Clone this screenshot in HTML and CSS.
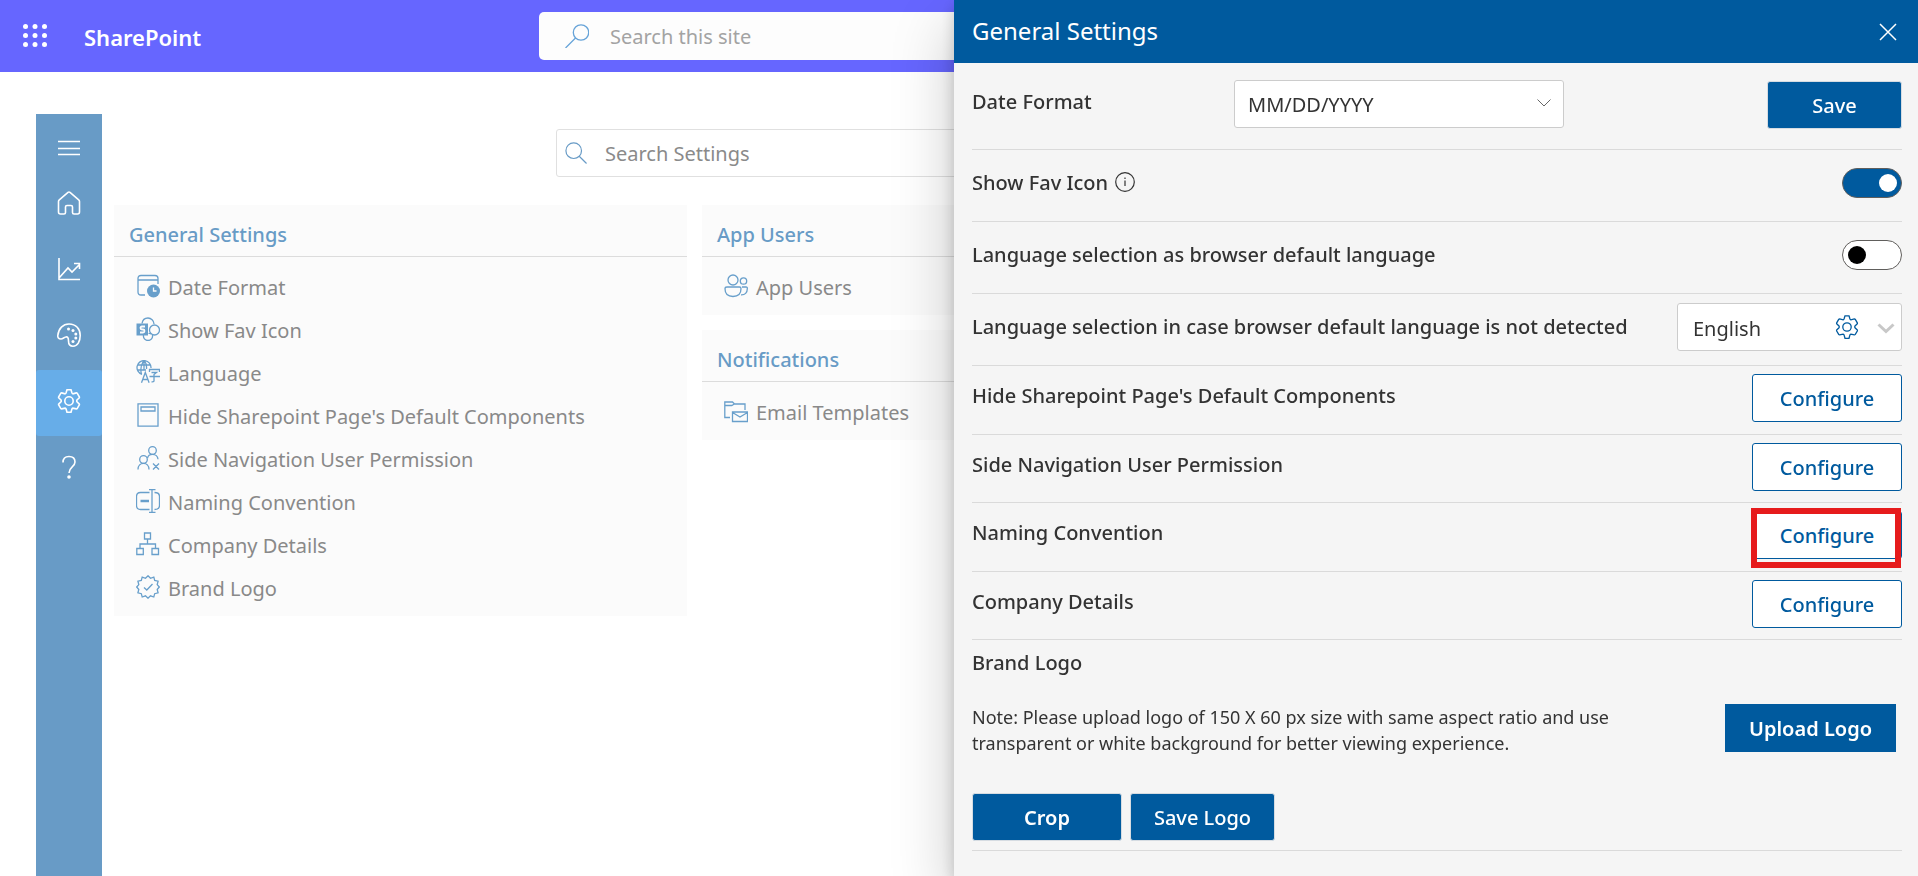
FILE: index.html
```
<!DOCTYPE html>
<html lang="en">
<head>
<meta charset="utf-8">
<title>SharePoint - General Settings</title>
<link rel="stylesheet" href="styles.css">
</head>
<body>
<svg class="defs" aria-hidden="true">
  <symbol id="gear" viewBox="0 0 24 24"><path d="M10 .8h4l.9 3q.3.8 1 1l3.400-.9q.7 0 1 .5l2 3.400q.3.800-.2 1.200L20 11q-.5.900 0 1.800l2.100 2q.5.500.2 1.200l-2 3.400q-.4.500-1 .5l-3.400-.8q-.7.200-1 1l-.9 3.200h-4l-.9-3.200q-.3-.8-1-1l-3.400.8q-.7 0-1-.5l-2-3.400q-.3-.700.2-1.200l2.100-2q.5-.900 0-1.800L1.900 9q-.5-.4-.2-1.200l2-3.400q.3-.5 1-.5l3.400.9q.7-.2 1-1z"/><circle cx="12" cy="12" r="4.200"/></symbol>
  <symbol id="people" viewBox="0 0 24 24"><circle cx="9" cy="6" r="5"/><circle cx="19.500" cy="7" r="3.200"/><path d="M3 13h12.500q1.500 0 1.500 1.800c0 5-3 7.700-8 7.700s-8-2.700-8-7.700Q1 13 3 13zM18 13h4q1.500 0 1.300 1.800c0 4-2.300 6.200-6.300 6"/></symbol>
</svg>

<header class="topbar">
  <button class="waffle" aria-label="App launcher">
    <svg width="24" height="24" viewBox="0 0 24 24"><g fill="currentColor"><circle cx="2.500" cy="2.500" r="2.500"/><circle cx="12" cy="2.500" r="2.500"/><circle cx="21.500" cy="2.500" r="2.500"/><circle cx="2.500" cy="11.500" r="2.500"/><circle cx="12" cy="11.500" r="2.500"/><circle cx="21.500" cy="11.500" r="2.500"/><circle cx="2.500" cy="20.500" r="2.500"/><circle cx="12" cy="20.500" r="2.500"/><circle cx="21.500" cy="20.500" r="2.500"/></g></svg>
  </button>
  <a class="brand" href="#">SharePoint</a>
  <label class="site-search">
    <svg class="icon" viewBox="0 0 24 24"><circle cx="16" cy="8.500" r="7.700"/><path d="M10.500 14 .5 24"/></svg>
    <input type="search" placeholder="Search this site" aria-label="Search this site">
  </label>
</header>

<div class="workspace">
  <nav class="rail" aria-label="Main">
    <button class="rail-item rail-menu" aria-label="Menu"><svg class="icon" viewBox="0 0 24 24"><path d="M1 5.500h22M1 12.500h22M1 18.500h22"/></svg></button>
    <a class="rail-item" href="#" aria-label="Home"><svg class="icon" viewBox="0 0 24 24"><path d="M1.500 10.500Q1.500 9.500 2.300 8.800L11 1.400q1-.8 2 0l8.700 7.400q.8.700.8 1.700V21q0 2-2 2H17q-1.500 0-1.500-1.500V16q0-1.500-1.500-1.500h-4q-1.500 0-1.500 1.500v5.500Q8.500 23 7 23H3.500q-2 0-2-2z"/></svg></a>
    <a class="rail-item" href="#" aria-label="Analytics"><svg class="icon" viewBox="0 0 24 24"><path d="M2 1v21.500h21M2 21l9-10 4 4 8-8M17 6.500h5.500V12"/></svg></a>
    <a class="rail-item" href="#" aria-label="Theme"><svg class="icon" viewBox="0 0 24 24"><path d="M.8 12.500C1.500 5.500 6 1 12 1c7 0 11.200 5 11.200 11.500 0 6-2.700 10.700-7.200 10.700-3.200 0-4.500-2-4.500-5.200 0-3.500-1-4.500-2.800-4-2 .5-2.700 2-4.700 2C1.500 16 .6 14.500.8 12.500z"/><g fill="currentColor" stroke="none"><circle cx="11.500" cy="6" r="1.500"/><circle cx="16" cy="7.500" r="1.500"/><circle cx="18.800" cy="11" r="1.500"/><circle cx="18.800" cy="15" r="1.500"/><circle cx="16" cy="18.500" r="1.500"/></g></svg></a>
    <a class="rail-item active" href="#" aria-label="Settings"><svg class="icon"><use href="#gear"/></svg></a>
    <a class="rail-item" href="#" aria-label="Help"><svg class="icon" viewBox="0 0 24 24"><path d="M6 7.500C6 3.500 8.500 1.500 12 1.500s6 2 6 5.500c0 5-6 5-6 11"/><circle cx="12" cy="22" r="1" fill="currentColor"/></svg></a>
  </nav>

  <main class="content">
    <label class="settings-search">
      <svg class="icon" viewBox="0 0 24 24"><circle cx="9.500" cy="9.500" r="8.500"/><path d="m15.500 15.500 8 8"/></svg>
      <input type="search" placeholder="Search Settings" aria-label="Search Settings">
    </label>
    <div class="cards">
      <section class="card">
        <h2>General Settings</h2>
        <ul>
          <li><a href="#"><svg class="icon" viewBox="0 0 24 24"><path d="M9 21H5q-3 0-3-3V4.500q0-3 3-3h14q3 0 3 3V10M2 6h20"/><circle cx="17.500" cy="17" r="6.500" fill="currentColor" stroke="none"/><path d="M17.500 13.500V17h3" stroke="#fbfbfb"/></svg>Date Format</a></li>
          <li><a href="#"><svg class="icon" viewBox="0 0 24 24"><path d="M6 6.500C6.500 3 9 1 12 1s6 2.500 6 6"/><circle cx="18.500" cy="13" r="5"/><path d="M7.500 18c-.5 3 1.500 5.500 4.500 5.500s5-2.500 4.500-5.500M12.500 16.500q1.500-.5 2.500.5"/><path d="M.5 6.500H12v12H.5z" fill="currentColor" stroke="none"/><path d="M9 9.500H6q-1.500 0-1.500 1.500T6 12.500h1Q8.500 12.500 8.500 14T7 15.500H4" stroke="#fbfbfb" stroke-width="1.800"/></svg>Show Fav Icon</a></li>
          <li><a href="#"><svg class="icon" viewBox="0 0 24 24"><path d="M6 14.300A7 7 0 1 1 15 8M1.500 5h13M1 10h9M5.500 14Q3.500 7.500 7.500.8M10.500 9Q11 4 8.500.8M8 .8V10"/><path d="m5.500 22.800 3.800-10.300 3.800 10.300M7 19.500h5M13.500 12V9.500h10V12M15.500 12.500h5l-2.500 2v6.500q0 1-2.500.8M13.500 16.500h10.500"/></svg>Language</a></li>
          <li><a href="#"><svg class="icon" viewBox="0 0 24 24"><path d="M2 .8h20v22.400H2zM5 4h14v4H5z"/></svg>Hide Sharepoint Page's Default Components</a></li>
          <li><a href="#"><svg class="icon" viewBox="0 0 24 24"><circle cx="16.500" cy="4.500" r="3.800"/><circle cx="7.500" cy="13.500" r="3.800"/><path d="M2 23.500c0-4 2.500-6.200 5.500-6.200s5.500 2.200 5.500 6.200M11.500 12c.5-2.500 2.500-3.700 5-3.700 3 0 5.300 2.200 5.500 5M17 17.500l6 6M23 17.500l-6 6"/></svg>Side Navigation User Permission</a></li>
          <li><a href="#"><svg class="icon" viewBox="0 0 24 24"><path d="M13.500 3.500H4.500q-4 0-4 4v9q0 4 4 4h9M18.500 3.500q5 0 5 4v9q0 4-5 4M16 .7v22.600M13 .7h6.500M13 23.300h6.500"/><path d="M4.500 12h8.500" stroke-width="2.500"/></svg>Naming Convention</a></li>
          <li><a href="#"><svg class="icon" viewBox="0 0 24 24"><path d="M8.500 1h6v6h-6zM.8 16.500h6.500v6H.8zM16 16.500h6.500v6H16zM11.500 7v5M4 16.500V12h15.500v4.500"/></svg>Company Details</a></li>
          <li><a href="#"><svg class="icon" viewBox="0 0 24 24"><path d="m12 .8 2.500 2.500 3.300-1.200.9 3.300 3.400.8-.9 3.400L23.300 12l-2.100 2.500.9 3.300-3.400.9-.9 3.300-3.300-1.200L12 23.200l-2.500-2.400L6.200 22l-.9-3.300-3.400-.9.9-3.300L.7 12l2.100-2.400-.9-3.400 3.400-.8.900-3.300 3.300 1.200zM8 12.500l2.800 2.500L16.500 9"/></svg>Brand Logo</a></li>
        </ul>
      </section>
      <div class="card-column">
        <section class="card">
          <h2>App Users</h2>
          <ul>
            <li><a href="#"><svg class="icon"><use href="#people"/></svg>App Users</a></li>
          </ul>
        </section>
        <section class="card">
          <h2>Notifications</h2>
          <ul>
            <li><a href="#"><svg class="icon" viewBox="0 0 24 24"><path d="M6 18.500H.8V3h7.700l2 2H21v6M.8 6.500h7l2.500-1.500M8.500 13h15v9.500h-15zM8.500 13.500l7.500 4.500 7.500-4.500"/></svg>Email Templates</a></li>
          </ul>
        </section>
      </div>
    </div>
  </main>
</div>

<aside class="panel" aria-labelledby="panel-title">
  <div class="panel-head">
    <h1 id="panel-title">General Settings</h1>
    <button class="close" aria-label="Close"><svg class="icon" viewBox="0 0 18 18"><path d="m1 1 16 16M17 1 1 17"/></svg></button>
  </div>
  <form class="panel-body">
    <div class="row row-date">
      <label class="label" for="date-format">Date Format</label>
      <div class="select-box date-box">
        <select id="date-format"><option>MM/DD/YYYY</option><option>DD/MM/YYYY</option></select>
        <svg class="chevron thin" viewBox="0 0 14 8"><path d="m.5.5 6.500 6.500 6.500-6.500"/></svg>
      </div>
      <button class="btn primary save" type="button">Save</button>
    </div>
    <div class="row">
      <label class="label" for="fav">Show Fav Icon <svg class="info" viewBox="0 0 20 20"><circle cx="10" cy="10" r="9.300"/><path d="M10 8.500V14M10 5.500v1.500"/></svg></label>
      <input class="toggle" id="fav" type="checkbox" role="switch" checked>
    </div>
    <div class="row">
      <label class="label" for="browser-lang">Language selection as browser default language</label>
      <input class="toggle" id="browser-lang" type="checkbox" role="switch">
    </div>
    <div class="row">
      <label class="label" for="fallback-lang">Language selection in case browser default language is not detected</label>
      <div class="select-box lang-box">
        <select id="fallback-lang"><option>English</option></select>
        <svg class="lang-gear icon"><use href="#gear"/></svg>
        <svg class="chevron thick" viewBox="0 0 18 11"><path d="m1.500 1.500 7.500 7 7.500-7"/></svg>
      </div>
    </div>
    <div class="row compact"><span class="label" id="l-hide">Hide Sharepoint Page's Default Components</span><button class="btn outline" type="button" aria-describedby="l-hide">Configure</button></div>
    <div class="row compact short"><span class="label" id="l-nav">Side Navigation User Permission</span><button class="btn outline" type="button" aria-describedby="l-nav">Configure</button></div>
    <div class="row compact"><span class="label" id="l-name">Naming Convention</span><span class="highlight"><button class="btn outline" type="button" aria-describedby="l-name">Configure</button></span></div>
    <div class="row compact short"><span class="label" id="l-comp">Company Details</span><button class="btn outline" type="button" aria-describedby="l-comp">Configure</button></div>
    <section class="logo-section">
      <h2 class="label">Brand Logo</h2>
      <div class="upload">
        <p>Note: Please upload logo of 150 X 60 px size with same aspect ratio and use transparent or white background for better viewing experience.</p>
        <button class="btn upload-btn" type="button">Upload Logo</button>
      </div>
      <div class="logo-actions">
        <button class="btn primary crop" type="button">Crop</button>
        <button class="btn primary save-logo" type="button">Save Logo</button>
      </div>
    </section>
  </form>
</aside>
</body>
</html>
```
FILE: styles.css
```
* { box-sizing: border-box; }

html, body { height: 100%; }

body {
  margin: 0;
  display: flex;
  flex-direction: column;
  overflow: hidden;
  background: #fff;
  color: #333;
  font: 20px/26px "Noto Sans", "Open Sans", sans-serif;
}

button, input, select { font: inherit; color: inherit; }
h1, h2, p, ul { margin: 0; padding: 0; }
ul { list-style: none; }
a { color: inherit; text-decoration: none; }
.defs { display: none; }

.icon {
  flex: none;
  width: 24px;
  height: 24px;
  fill: none;
  stroke: currentColor;
  stroke-width: 1.3;
}

/* Top bar */
.topbar {
  flex: none;
  display: flex;
  align-items: center;
  height: 72px;
  padding-left: 23px;
  background: #66f;
  color: #fff;
}
.waffle { display: flex; padding: 0; border: 0; background: none; }
.brand { width: 455px; margin-left: 37px; padding-top: 2px; font-size: 22px; font-weight: 600; }
.site-search {
  display: flex;
  align-items: center;
  gap: 21px;
  width: 700px;
  height: 48px;
  padding: 0 26px;
  border-radius: 5px;
  background: #fdfdfd;
  color: #66a3d8;
}
input[type="search"] {
  flex: 1;
  min-width: 0;
  padding: 1px 0 0;
  border: 0;
  outline: 0;
  background: none;
}
.site-search ::placeholder { color: #a3a3a3; }
.settings-search ::placeholder { color: #8a8a8a; }

/* Workspace */
.workspace { flex: 1; display: flex; gap: 12px; padding: 42px 36px 0; }
.rail { width: 66px; flex: none; background: #689bc6; color: #fff; }
.rail-item {
  display: flex;
  align-items: center;
  justify-content: center;
  width: 100%;
  height: 66px;
  padding-bottom: 4px;
  border-radius: 3px;
}
.rail .icon { stroke-width: 1.6; }
.rail-menu { height: 58px; padding: 10px 0 0; border: 0; background: none; }
.rail-item.active { background: #67ade8; }

.content { flex: 1; padding-top: 15px; }
.settings-search {
  display: flex;
  align-items: center;
  gap: 18px;
  width: 700px;
  height: 48px;
  margin-left: 442px;
  padding: 0 8px;
  border: 1px solid #e0e0e0;
  border-radius: 3px;
  color: #689bc6;
}
.settings-search .icon { width: 22px; height: 22px; }

.cards { display: grid; grid-template-columns: 573px 573px; gap: 15px; margin-top: 28px; }
.card-column { display: flex; flex-direction: column; gap: 15px; }
.card { align-self: start; width: 100%; background: #fbfbfb; color: #898989; }
.card h2 {
  height: 52px;
  padding: 17px 15px 0;
  border-bottom: 1px solid #dcdcdc;
  color: #689bc6;
  font-size: 20px;
  font-weight: 500;
}
.card ul { padding: 9px 22px 6px; }
.card li a { display: flex; align-items: center; gap: 8px; height: 43px; }
.card .icon { color: #689fcb; margin-bottom: 4px; }

/* Settings panel */
.panel {
  position: fixed;
  inset: 0 0 0 auto;
  width: calc(50% + 5px);
  background: #f5f5f5;
  box-shadow: 0 26px 58px rgba(0, 0, 0, .22), 0 5px 14px rgba(0, 0, 0, .18);
}
.panel-head {
  display: flex;
  align-items: center;
  justify-content: space-between;
  height: 63px;
  padding: 0 21px 0 18px;
  background: #005a9e;
  color: #fff;
}
.panel-head h1 { padding-bottom: 2px; font-size: 24px; font-weight: 400; }
.close { display: flex; padding: 0; border: 0; background: none; }
.close .icon { width: 18px; height: 18px; stroke-width: 1.5; }

.panel-body { padding: 0 16px 0 18px; }
.row {
  display: flex;
  align-items: center;
  justify-content: space-between;
  height: 72px;
  padding-bottom: 5px;
  border-bottom: 1px solid #dadada;
}
.row-date { height: 87px; padding-bottom: 4px; }
.row-date .label { flex: 0 0 262px; }
.label { font-size: 20px; font-weight: 500; }
.row-date .label, .compact .label { margin-bottom: 4px; }
.compact { height: 69px; padding-bottom: 4px; }
.short { height: 68px; }

.info {
  width: 20px;
  height: 20px;
  margin-left: 2px;
  vertical-align: -2px;
  fill: none;
  stroke: #333;
  stroke-width: 1.2;
}

.select-box { position: relative; display: flex; height: 48px; }
.select-box select {
  appearance: none;
  width: 100%;
  padding: 1px 13px 0;
  border: 1px solid #ccc;
  border-radius: 3px;
  background: #fff;
}
.date-box { flex: 0 0 330px; margin-right: auto; }
.lang-box { width: 225px; }
.lang-box select { padding: 3px 15px 0; }
.chevron { position: absolute; fill: none; pointer-events: none; }
.thin { right: 13px; top: 19px; width: 14px; height: 8px; stroke: #666; }
.thick { right: 7px; top: 20px; width: 18px; height: 11px; stroke: #c8c8c8; stroke-width: 3; }
.lang-gear { position: absolute; right: 43px; top: 12px; color: #005a9e; pointer-events: none; }

.btn { height: 48px; padding: 2px 0 0; border-radius: 3px; font-weight: 500; }
.outline { width: 150px; border: 1px solid #005a9e; background: #fff; color: #005a9e; }
.primary { border: 1px solid #d6dce2; background: #005a9e; color: #fff; }
.save { width: 135px; margin-top: 2px; }

.toggle {
  appearance: none;
  display: flex;
  align-items: center;
  width: 60px;
  height: 30px;
  margin: 0;
  padding: 0 5px;
  border: 1px solid #605e5c;
  border-radius: 15px;
  background: #fff;
}
.toggle::before { content: ""; width: 18px; height: 18px; border-radius: 50%; background: #000; }
.toggle:checked { justify-content: flex-end; padding-right: 4px; background: #005a9e; }
.toggle:checked::before { background: #fff; }

.highlight { position: relative; display: flex; }
.highlight::after {
  content: "";
  position: absolute;
  inset: -3px 1px -9px -1px;
  border: 6px solid #e61b1c;
  pointer-events: none;
}

.logo-section { padding: 10px 0 9px; border-bottom: 1px solid #dadada; }
.upload { display: flex; align-items: flex-start; justify-content: space-between; padding: 28px 6px 0 0; }
.upload p { width: 680px; font-size: 18px; }
.upload-btn { width: 171px; border: 0; border-radius: 0; background: #005a9e; color: #fff; font-weight: 600; }
.logo-actions { display: flex; gap: 8px; margin-top: 37px; }
.crop { width: 150px; font-weight: 600; }
.save-logo { width: 145px; }
```
